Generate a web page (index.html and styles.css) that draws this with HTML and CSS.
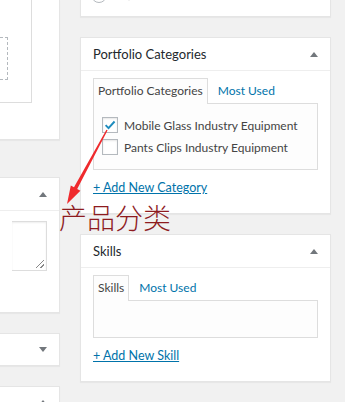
FILE: index.html
```html
<!DOCTYPE html>
<html lang="en">
<head>
    <meta charset="UTF-8">
    <meta name="viewport" content="width=device-width, initial-scale=1.0">
    <title>Portfolio sidebar</title>
    <link rel="stylesheet" href="styles.css">
</head>
<body>
    <div class="screen">
        <div class="col col-left">
            <div class="box box-editor">
                <div class="editor-frame">
                    <div class="drop-zone"></div>
                </div>
            </div>
            <div class="box box-excerpt">
                <div class="box-head"><span></span><span class="toggle"></span></div>
                <div class="box-body">
                    <div class="textarea"><span class="grip"></span></div>
                </div>
            </div>
            <div class="box box-closed">
                <div class="box-head"><span></span><span class="toggle down"></span></div>
            </div>
            <div class="box box-closed">
                <div class="box-head"><span></span><span class="toggle"></span></div>
            </div>
        </div>

        <div class="col col-right">
            <div class="box box-format">
                <div class="format-row">
                    <span class="radio"></span>
                    <span class="format-icon"></span>
                    <span class="format-label">Chat</span>
                </div>
            </div>

            <div class="box box-side">
                <div class="box-head"><span>Portfolio Categories</span><span class="toggle"></span></div>
                <div class="box-body">
                    <div class="tabs">
                        <span class="tab active">Portfolio Categories</span>
                        <a class="tab" href="#">Most Used</a>
                    </div>
                    <div class="tab-panel">
                        <label class="check-row">
                            <span class="checkbox checked">
                                <svg viewBox="0 0 16 16" width="14" height="14"><path d="M3 8.2l3.3 3.3L13.2 4" fill="none" stroke="#1e8cbe" stroke-width="2.2"/></svg>
                            </span>
                            Mobile Glass Industry Equipment
                        </label>
                        <label class="check-row">
                            <span class="checkbox"></span>
                            Pants Clips Industry Equipment
                        </label>
                    </div>
                    <a class="add-link" href="#">+ Add New Category</a>
                </div>
            </div>

            <div class="box box-side">
                <div class="box-head"><span>Skills</span><span class="toggle"></span></div>
                <div class="box-body">
                    <div class="tabs">
                        <span class="tab active">Skills</span>
                        <a class="tab" href="#">Most Used</a>
                    </div>
                    <div class="tab-panel empty"></div>
                    <a class="add-link" href="#">+ Add New Skill</a>
                </div>
            </div>
        </div>

        <!-- annotation drawn over the screenshot -->
        <svg class="arrow" width="345" height="402" viewBox="0 0 345 402">
            <polygon points="107.6,130.3 77.2,189 80.4,190.7 67,204 70.8,185.5 74,187.2 106.4,129.7" fill="#ef2a2d"/>
        </svg>
        <div class="note">产品分类</div>
    </div>
</body>
</html>
```

FILE: styles.css
```css
html, body {
    margin: 0;
    padding: 0;
}
body {
    background: #f1f1f1;
    font-family: Lato, "Open Sans", Arial, sans-serif;
    font-size: 12px;
    color: #444;
}
.screen {
    position: relative;
    display: flex;
    align-items: flex-start;
    gap: 20px;
    width: 345px;
    height: 402px;
    overflow: hidden;
}
.col {
    flex: none;
    display: flex;
    flex-direction: column;
}
.col-left {
    width: 60px;
}
.col-right {
    width: 251px;
}
.box {
    flex: none;
    background: #fff;
    border: 1px solid #e5e5e5;
    box-shadow: 0 1px 1px rgba(0, 0, 0, 0.04);
}
.col-left .box {
    border-left: 0;
}
.box-head {
    height: 32px;
    padding: 0 12px;
    display: flex;
    align-items: center;
    justify-content: space-between;
    border-bottom: 1px solid #eee;
    font-size: 13px;
    color: #23282d;
}
.box-closed .box-head {
    height: 31px;
    border-bottom: 0;
}
.toggle {
    width: 0;
    height: 0;
    border-left: 4px solid transparent;
    border-right: 4px solid transparent;
    border-bottom: 5px solid #72777c;
}
.toggle.down {
    border-bottom: 0;
    border-top: 5px solid #72777c;
}
.box-body {
    padding: 7px 12px 16px;
}

/* left column */
.box-editor {
    height: 139px;
    border-top: 0;
}
.editor-frame {
    width: 32px;
    height: 103px;
    border-right: 1px solid #ddd;
    border-bottom: 1px solid #ddd;
    padding-top: 37px;
    box-sizing: border-box;
}
.drop-zone {
    width: 8px;
    height: 43px;
    border: 1px dashed #b4b9be;
    border-left: 0;
    box-sizing: border-box;
}
.box-excerpt {
    margin-top: 37px;
}
.box-excerpt .box-body {
    padding: 10px 12px 41px;
}
.textarea {
    position: relative;
    height: 50px;
    border: 1px solid #ddd;
    border-left: 0;
    box-sizing: border-box;
    box-shadow: inset 0 1px 2px rgba(0, 0, 0, 0.07);
}
.grip {
    position: absolute;
    right: 2px;
    bottom: 2px;
    width: 8px;
    height: 8px;
    background: linear-gradient(135deg, transparent 45%, #888 45%, #888 55%, transparent 55%, transparent 75%, #888 75%, #888 85%, transparent 85%);
}
.box-closed {
    margin-top: 20px;
}

/* right column */
.box-format {
    height: 16px;
    border-top: 0;
    overflow: hidden;
}
.format-row {
    display: flex;
    align-items: center;
    gap: 10px;
    margin-top: -13px;
    padding-left: 10px;
    height: 16px;
}
.radio {
    width: 14px;
    height: 14px;
    border: 1px solid #b4b9be;
    border-radius: 50%;
}
.format-icon {
    width: 8px;
    height: 8px;
    background: #ccc;
    transform: rotate(45deg);
    margin-left: 8px;
}
.format-label {
    color: #555;
}
.box-side {
    margin-top: 20px;
}
.tabs {
    display: flex;
    align-items: flex-end;
    gap: 5px;
    position: relative;
    z-index: 1;
}
.tab {
    padding: 3px 4px 4px;
    line-height: 17px;
    color: #0073aa;
    text-decoration: none;
    border: 1px solid transparent;
    border-bottom: 0;
    white-space: nowrap;
}
.tab.active {
    color: #444;
    background: #fdfdfd;
    border-color: #ddd;
    margin-bottom: -1px;
    padding-bottom: 5px;
}
.tab-panel {
    border: 1px solid #ddd;
    background: #fdfdfd;
    padding: 10px 8px 11px;
}
.tab-panel.empty {
    height: 15px;
}
.check-row {
    display: flex;
    align-items: center;
    gap: 6px;
    height: 22px;
    color: #444;
    white-space: nowrap;
}
.checkbox {
    flex: none;
    width: 14px;
    height: 14px;
    border: 1px solid #b4b9be;
    background: #fff;
    box-shadow: inset 0 1px 2px rgba(0, 0, 0, 0.1);
    display: flex;
    align-items: center;
    justify-content: center;
}
.add-link {
    display: inline-block;
    margin-top: 9px;
    line-height: 18px;
    font-size: 12.5px;
    color: #0073aa;
    text-decoration: underline;
}

/* annotation */
.arrow {
    position: absolute;
    left: 0;
    top: 0;
    pointer-events: none;
}
.note {
    position: absolute;
    left: 59px;
    top: 199px;
    font-family: "Noto Sans CJK SC", sans-serif;
    font-weight: 300;
    font-size: 28px;
    line-height: 36px;
    color: #8e1b1f;
}
```
